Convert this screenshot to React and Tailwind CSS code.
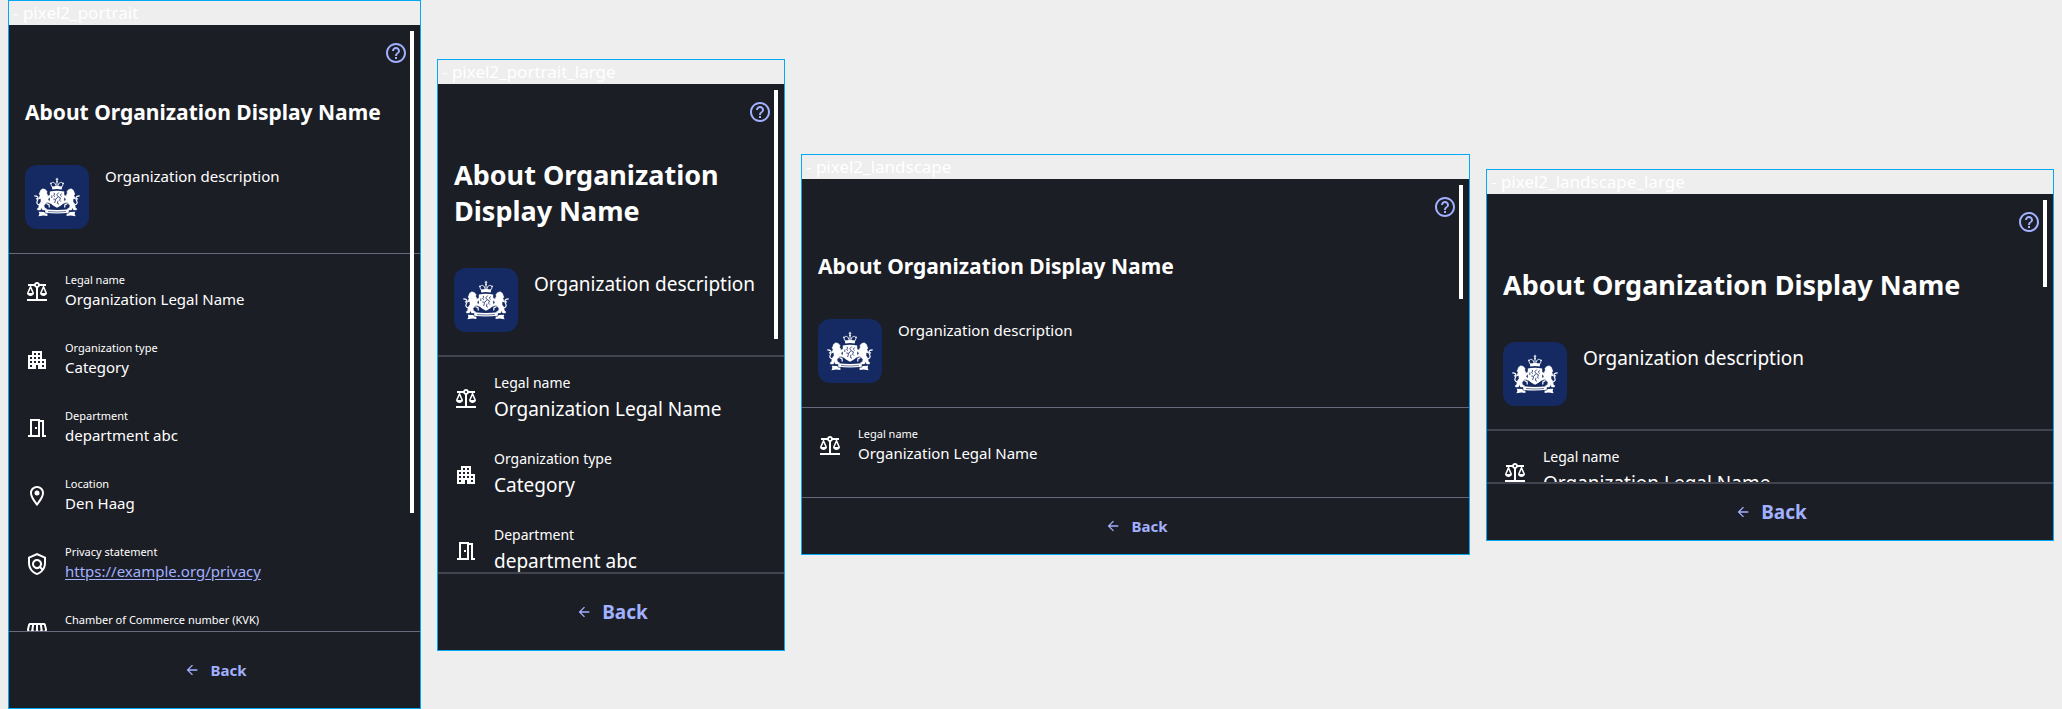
import { useId } from "react";
import {
  MdApartment,
  MdArrowBack,
  MdHelpOutline,
  MdOutlineBalance,
  MdOutlineLocationOn,
  MdOutlineMeetingRoom,
  MdOutlinePolicy,
  MdOutlineStorefront,
} from "react-icons/md";

function Lion() {
  return (
    <g stroke="currentColor" strokeLinejoin="round">
      <path
        fill="currentColor"
        strokeWidth="0.5"
        d="M14.800 27.600l.8-2.300 2.200-1.500 2.500.7 1.700 1.900-.3 2 1 1.500-.2 1.400 1.800-.8 1.300-1.300 1 .5-.5 1.700-2.300 1.700-.9 1.700 2 1.500 1.900.6.400 1.500-2-.100-3.200-1-1.300 1.100-1.700 2.200.5 2.200 1.900.9-.3 1.200h-3.600l-1.100-2.500-1 2.500h-2.900l-.2-1.200 1.400-1.100.4-3.200 1.900-2.900-.100-2.500-1.700-1.400.9-2.100-1-1.400z"
      />
      <path
        fill="none"
        strokeWidth="1.200"
        d="M14.800 40c-2.800-.4-3.500-2.200-2.600-4 .9-1.500 1.800-2.600.5-4-.8-.9-2-1.200-3.400-1.200M11 34.300l1.800-1"
      />
      <path fill="none" strokeWidth="1.200" d="M21.500 38.500l2.600 1.400.2 2.600M16.500 32.300l-2.700 1.300" />
    </g>
  );
}

function CoatOfArms({ className }) {
  return (
    <svg viewBox="0 0 64 64" className={className} role="img" aria-label="Coat of arms">
      <Lion />
      <g transform="translate(64 0) scale(-1 1)">
        <Lion />
      </g>
      <g fill="none" stroke="currentColor" strokeWidth="0.900">
        <path d="M32 12.800v4M30.700 14.300h2.600" />
        <path d="M27.400 22c-2.400-2.500-1.200-5 1-4.600 1.900.4 2.800 2.300 2.400 4.600M36.600 22c2.400-2.500 1.200-5-1-4.600-1.900.4-2.800 2.300-2.400 4.600M32 17v5" />
      </g>
      <g fill="currentColor">
        <circle cx="25.900" cy="18.400" r="0.800" />
        <circle cx="38.100" cy="18.400" r="0.800" />
        <circle cx="32" cy="16.500" r="0.900" />
        <path d="M26.800 21.600q5.200-1.300 10.400 0l-.5 2.900q-4.700-1-9.400 0z" />
        <path d="M24.800 26.400q7.200-1.300 14.400 0v9.200c0 3.400-3.500 5.400-7.200 7.200-3.700-1.800-7.200-3.800-7.200-7.200z" />
        <path d="M20.200 44.200q11.800 1.500 23.600 0v3.600q-11.800 1.400-23.600 0z" />
        <path d="M13.800 46.700l5.400.3 1.200 1.500h2v2.400l-4-.4-5 .8 1-2.200zM50.200 46.700l-5.400.3-1.200 1.500h-2v2.400l4-.4 5 .8-1-2.200z" />
      </g>
      <g className="text-[#152a62]" stroke="currentColor" fill="none" strokeWidth="0.800">
        <path d="M29 27.800l.7 1.300-1.100 1.400 1.400 1.200M33.800 27.500l-2 2.300 1.300 1.800-2.300 2.700-2.500-.3M33.200 31.700l2.300 1.200-.9 2.300 1.300 1.400M30.600 34.700l-1 3.300M33 35.700l-.6 2.700 1.600.9M36.500 28.400l-1.200 1.800 1.400 1.200M26.800 30.500v2.500" />
        <path strokeWidth="0.600" d="M23 46.500q9 1 18 0" />
      </g>
    </svg>
  );
}

const details = [
  { Icon: MdOutlineBalance, label: "Legal name", value: "Organization Legal Name" },
  { Icon: MdApartment, label: "Organization type", value: "Category" },
  { Icon: MdOutlineMeetingRoom, label: "Department", value: "department abc" },
  { Icon: MdOutlineLocationOn, label: "Location", value: "Den Haag" },
  { Icon: MdOutlinePolicy, label: "Privacy statement", value: "https://example.org/privacy", href: "https://example.org/privacy" },
  { Icon: MdOutlineStorefront, label: "Chamber of Commerce number (KVK)" },
];

const textSizes = {
  normal: {
    title: "text-[21px] leading-7",
    body: "text-[15px] leading-[22px]",
    label: "text-[11px] leading-4",
    row: "pt-[14px] pb-[14px]",
    list: "pb-[2px]",
    intro: "pb-6",
    divider: "border-t border-[#67697f]",
  },
  large: {
    title: "text-[27px] leading-9",
    body: "text-[19px] leading-8",
    label: "text-[14px] leading-5",
    row: "py-3",
    list: "",
    intro: "pb-[23px]",
    divider: "border-t-2 border-[#41434f]",
  },
};

function Detail({ item, sizes }) {
  const { Icon, label, value, href } = item;
  return (
    <div className={`flex items-center gap-4 px-4 ${sizes.row}`}>
      <Icon className="size-6 shrink-0" />
      <dl className={`min-w-0 whitespace-nowrap ${sizes.list}`}>
        <dt className={sizes.label}>{label}</dt>
        <dd className={sizes.body}>
          {href ? (
            <a href={href} className="text-[#a1b0ff] underline underline-offset-2">
              {value}
            </a>
          ) : (
            value || "\u00a0"
          )}
        </dd>
      </dl>
    </div>
  );
}

function Device({ name, size, aspect, thumb, footer, visible }) {
  const sizes = textSizes[size];
  const titleId = useId();
  return (
    <article
      aria-labelledby={titleId}
      className={`flex flex-col overflow-hidden border border-[#03a9f4] ${aspect}`}
    >
      <p className="h-6 shrink-0 px-1 text-[17px] leading-6 whitespace-nowrap text-white">- {name}</p>
      <div className="relative flex min-h-0 flex-1 flex-col bg-[#1c1e25] text-white">
        <div className="min-h-0 flex-1 overflow-hidden">
          <header className="flex h-14 items-center justify-end px-3">
            <button type="button" aria-label="Help" className="text-[#a1b0ff]">
              <MdHelpOutline className="size-6" />
            </button>
          </header>
          <h1 id={titleId} className={`px-4 pt-[17px] pb-[39px] font-bold ${sizes.title}`}>
            About Organization Display Name
          </h1>
          <div className={`flex gap-4 px-4 ${sizes.intro}`}>
            <div className="size-16 shrink-0 rounded-xl bg-[#152a62]">
              <CoatOfArms className="size-16" />
            </div>
            <p className={sizes.body}>Organization description</p>
          </div>
          <div className={`pt-1 ${sizes.divider}`}>
            {details.slice(0, visible).map((item) => (
              <Detail key={item.label} item={item} sizes={sizes} />
            ))}
          </div>
        </div>
        <div className={`absolute top-[6px] right-[6px] w-1 bg-white ${thumb}`} />
        <footer className={`flex shrink-0 ${sizes.divider} ${footer}`}>
          <button
            type="button"
            className={`flex flex-1 items-center justify-center gap-[10px] pl-[2px] font-bold text-[#a1b0ff] ${sizes.body}`}
          >
            <MdArrowBack className="size-4" />
            Back
          </button>
        </footer>
      </div>
    </article>
  );
}

export default function App() {
  return (
    <main className="grid min-h-screen grid-cols-[413fr_348fr_669fr_568fr] items-center gap-4 bg-[#eeeeee] px-2 font-['Noto_Sans',sans-serif]">
      <Device name="pixel2_portrait" size="normal" aspect="aspect-[413/709]" thumb="h-[482px]" footer="h-[77px]" visible={6} />
      <Device name="pixel2_portrait_large" size="large" aspect="aspect-[348/592]" thumb="h-[249px]" footer="h-[78px]" visible={3} />
      <Device name="pixel2_landscape" size="normal" aspect="aspect-[669/401]" thumb="h-[114px]" footer="h-[57px]" visible={1} />
      <Device name="pixel2_landscape_large" size="large" aspect="aspect-[568/372]" thumb="h-[87px]" footer="h-[58px]" visible={1} />
    </main>
  );
}
